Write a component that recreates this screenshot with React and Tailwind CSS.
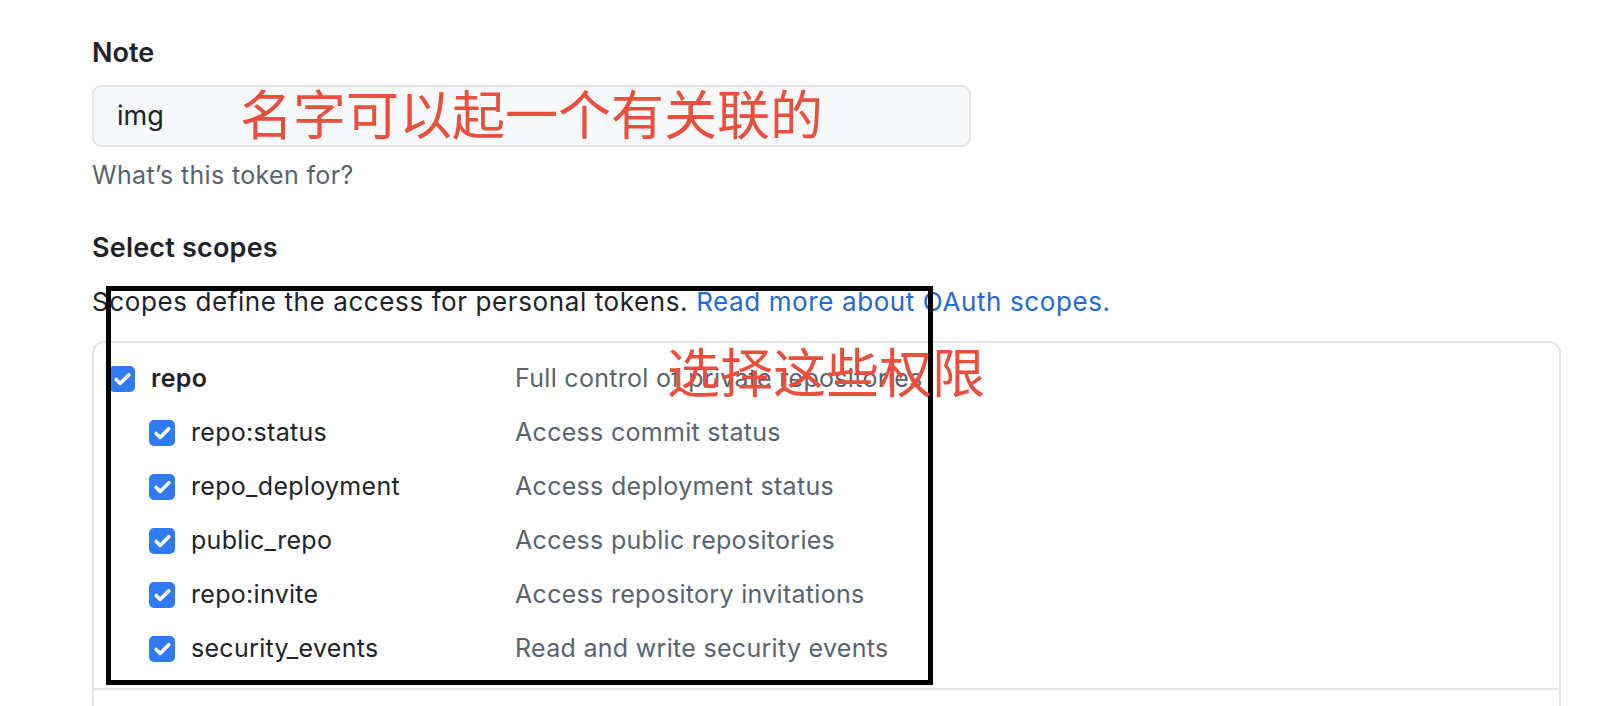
import { Check } from "lucide-react";

const scopes = [
    { name: "repo:status", desc: "Access commit status" },
    { name: "repo_deployment", desc: "Access deployment status" },
    { name: "public_repo", desc: "Access public repositories" },
    { name: "repo:invite", desc: "Access repository invitations" },
    { name: "security_events", desc: "Read and write security events" },
];

const Box = () => (
    <span className="flex items-center justify-center w-[26px] h-[26px] rounded-[5px] bg-[#2f7bf5] shrink-0">
        <Check className="w-[19px] h-[19px] text-white" strokeWidth={4.5} />
    </span>
);

const App = () => {
    return (
        <div className="relative w-[1614px] h-[706px] overflow-hidden bg-white font-['Inter','Liberation_Sans',sans-serif] text-[#1f2328]">
            <div className="pl-[92px] pt-[36px]">
                <label className="block text-[27px] leading-[34px] font-semibold">Note</label>
                <div className="mt-[15px] w-[879px] h-[62px] rounded-[9px] border-2 border-[#e1e4e8] bg-[#f6f8fa] flex items-center px-[23px] text-[27px]">
                    img
                </div>
                <p className="mt-[12px] text-[25px] leading-[32px] tracking-[0.35px] text-[#59636e]">What’s this token for?</p>

                <h3 className="mt-[40px] text-[27px] leading-[34px] font-semibold tracking-[0.2px]">Select scopes</h3>
                <p className="mt-[20px] text-[26px] leading-[34px] tracking-[0.6px]">
                    Scopes define the access for personal tokens.{" "}
                    <a className="text-[#1f6ad6]">Read more about OAuth scopes.</a>
                </p>

                <div className="mt-[22px] w-[1469px] border-2 border-b-0 border-[#e4e5e9] rounded-t-[12px]">
                    <div className="pt-[9px] pb-[12px] border-b-2 border-[#e4e5e9]">
                        <div className="flex items-center h-[54px]">
                            <div className="flex items-center gap-[16px] pl-[15px] w-[421px]">
                                <Box />
                                <span className="text-[25px] tracking-[0.3px] font-semibold">repo</span>
                            </div>
                            <span className="text-[25px] tracking-[0.3px] text-[#59636e]">Full control of private repositories</span>
                        </div>
                        {scopes.map((s) => (
                            <div key={s.name} className="flex items-center h-[54px]">
                                <div className="flex items-center gap-[16px] pl-[55px] w-[421px]">
                                    <Box />
                                    <span className="text-[25px] tracking-[0.3px]">{s.name}</span>
                                </div>
                                <span className="text-[25px] tracking-[0.3px] text-[#59636e]">{s.desc}</span>
                            </div>
                        ))}
                    </div>
                    <div className="h-[40px]"></div>
                </div>
            </div>

            {/* annotations drawn over the screenshot */}
            <div className="absolute left-[106px] top-[286px] w-[827px] h-[399px] border-[5px] border-black"></div>
            <span className="absolute left-[240px] top-[86px] text-[53px] leading-none text-[#ea4f3d] font-['Noto_Sans_CJK_SC',sans-serif]">名字可以起一个有关联的</span>
            <span className="absolute left-[667px] top-[344px] text-[53px] leading-none text-[#ea4f3d] font-['Noto_Sans_CJK_SC',sans-serif]">选择这些权限</span>
        </div>
    );
};

export default App;
